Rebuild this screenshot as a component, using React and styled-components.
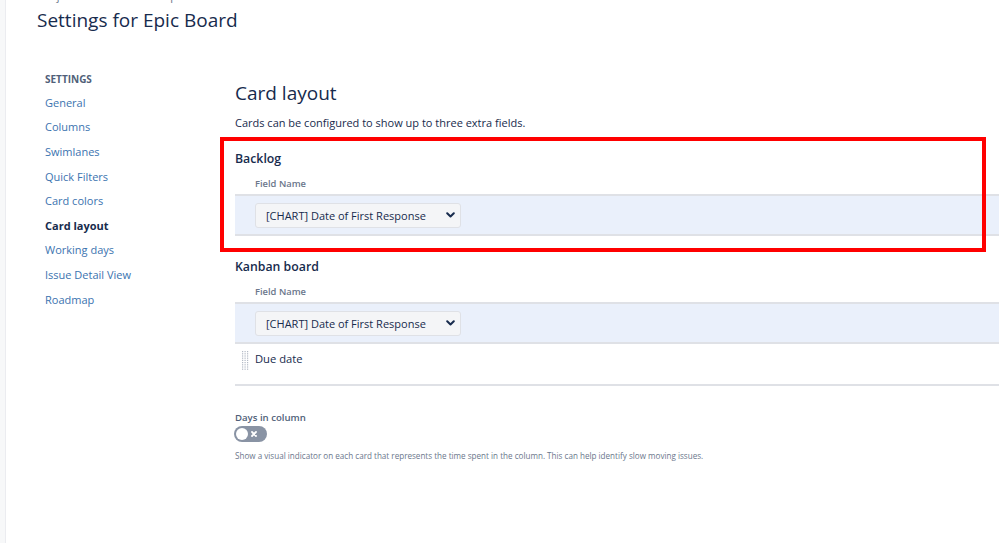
import React from "react";
import styled, { createGlobalStyle } from "styled-components";

const Global = createGlobalStyle`
  html, body { margin: 0; padding: 0; background: #fff; }
  body { font-family: "Open Sans", "Noto Sans", "Liberation Sans", sans-serif; color: #172b4d; overflow: hidden; }
  * { box-sizing: border-box; }
`;

const Page = styled.div`
  display: flex;
  width: 999px;
  height: 543px;
  position: relative;
  overflow: hidden;
`;

const LeftStrip = styled.div`
  width: 6px;
  flex: none;
  background: #f7f8f9;
  border-right: 1px solid #ebecf0;
`;

const Content = styled.div`
  flex: 1;
  padding-left: 31px;
  display: flex;
  flex-direction: column;
`;

const Breadcrumb = styled.div`
  font-size: 11px;
  color: #6b778c;
  height: 4px;
  line-height: 4px;
  overflow: hidden;
  padding-left: 2px;
  span { position: relative; top: -6px; }
`;

const Title = styled.h1`
  margin: 0;
  font-size: 19px;
  font-weight: 400;
  line-height: 30px;
  height: 30px;
  color: #172b4d;
  margin-top: 1px;
`;

const Body = styled.div`
  display: flex;
  margin-top: 36px;
`;

const Sidebar = styled.nav`
  width: 198px;
  flex: none;
  padding-left: 8px;
`;

const SideHeading = styled.div`
  font-size: 10px;
  font-weight: 700;
  color: #505f79;
  text-transform: uppercase;
  line-height: 16px;
  height: 16px;
  margin-bottom: 7.8px;
`;

const SideLink = styled.div`
  font-size: 11px;
  line-height: 16px;
  height: 24.6px;
  color: ${(p) => (p.$active ? "#172b4d" : "#3b73af")};
  font-weight: ${(p) => (p.$active ? 700 : 400)};
`;

const Main = styled.main`
  flex: 1;
  display: flex;
  flex-direction: column;
  position: relative;
  padding-top: 7px;
`;

const H2 = styled.h2`
  margin: 0;
  font-size: 19px;
  font-weight: 500;
  line-height: 26px;
  color: #172b4d;
  margin-top: 2px;
`;

const Desc = styled.p`
  margin: 0;
  margin-top: 10px;
  font-size: 11px;
  line-height: 14px;
  color: #172b4d;
`;

const Section = styled.section`
  display: flex;
  flex-direction: column;
  margin-top: ${(p) => p.$top}px;
`;

const SectionTitle = styled.h3`
  margin: 0;
  font-size: 12.3px;
  font-weight: 600;
  line-height: 16px;
  color: #172b4d;
`;

const FieldLabel = styled.div`
  font-size: 9.4px;
  font-weight: 600;
  color: #6b778c;
  line-height: 14px;
  padding-left: 20px;
  margin-top: 10px;
  margin-bottom: 3px;
`;

const Row = styled.div`
  display: flex;
  align-items: ${(p) => (p.$top ? "flex-start" : "center")};
  padding-top: ${(p) => (p.$top ? "8px" : "0")};
  height: 42px;
  margin-right: -40px;
  padding-left: 20px;
  background: ${(p) => (p.$highlight ? "#eaf0fb" : "#fff")};
  border-top: ${(p) => (p.$noTop ? "none" : "2px solid #dfe1e6")};
  border-bottom: 2px solid #dfe1e6;
  position: relative;
`;

const Select = styled.div`
  width: 206px;
  height: 25px;
  background: #f4f5f7;
  border: 1px solid #dfe1e6;
  border-radius: 3px;
  display: flex;
  align-items: center;
  justify-content: space-between;
  padding: 0 5px 0 10px;
  font-size: 11px;
  color: #172b4d;
`;

const Grip = styled.svg`
  position: absolute;
  left: 7px;
  top: 7px;
`;

const PlainText = styled.span`
  font-size: 11.2px;
  line-height: 14px;
  color: #172b4d;
`;

const Setting = styled.div`
  margin-top: 25px;
  display: flex;
  flex-direction: column;
`;

const SettingLabel = styled.div`
  font-size: 9.6px;
  font-weight: 600;
  color: #505f79;
  line-height: 14px;
`;

const Toggle = styled.div`
  width: 33px;
  height: 16px;
  border-radius: 8px;
  background: #8993a4;
  position: relative;
  margin-top: 1px;
  margin-left: -1px;
  &::before {
    content: "";
    position: absolute;
    left: 2px;
    top: 2px;
    width: 12px;
    height: 12px;
    border-radius: 50%;
    background: #fff;
  }
`;

const ToggleX = styled.svg`
  position: absolute;
  right: 10px;
  top: 5px;
`;

const Help = styled.p`
  margin: 0;
  margin-top: 7px;
  font-size: 8.1px;
  line-height: 13px;
  color: #6b778c;
`;

const Highlight = styled.div`
  position: absolute;
  left: -15px;
  top: 66px;
  width: 766px;
  height: 115px;
  border: 4px solid #ff0000;
  pointer-events: none;
`;

const Chevron = () => (
  <svg width="9" height="6" viewBox="0 0 9 6">
    <path d="M1.2 1.2 L4.5 4.5 L7.8 1.2" fill="none" stroke="#172b4d" strokeWidth="2" strokeLinecap="round" strokeLinejoin="round" />
  </svg>
);

const GripIcon = () => {
  const dots = [];
  for (let r = 0; r < 9; r++) {
    for (let c = 0; c < 3; c++) {
      dots.push(<rect key={`${r}-${c}`} x={c * 2.5} y={r * 2.2} width="1.2" height="1.2" fill="#b3bac5" />);
    }
  }
  return (
    <Grip width="7" height="19" viewBox="0 0 7 19">
      {dots}
    </Grip>
  );
};

const FieldSelect = () => (
  <Select>
    <span>[CHART] Date of First Response</span>
    <Chevron />
  </Select>
);

const links = [
  "General",
  "Columns",
  "Swimlanes",
  "Quick Filters",
  "Card colors",
  "Card layout",
  "Working days",
  "Issue Detail View",
  "Roadmap",
];

export default function App() {
  return (
    <>
      <Global />
      <Page>
        <LeftStrip />
        <Content>
          <Breadcrumb>
            <span>Projects / Service Desk / Epic Board</span>
          </Breadcrumb>
          <Title>Settings for Epic Board</Title>
          <Body>
            <Sidebar>
              <SideHeading>Settings</SideHeading>
              {links.map((l) => (
                <SideLink key={l} $active={l === "Card layout"}>
                  {l}
                </SideLink>
              ))}
            </Sidebar>
            <Main>
              <H2>Card layout</H2>
              <Desc>Cards can be configured to show up to three extra fields.</Desc>
              <Section $top={21}>
                <SectionTitle>Backlog</SectionTitle>
                <FieldLabel>Field Name</FieldLabel>
                <Row $highlight>
                  <FieldSelect />
                </Row>
              </Section>
              <Section $top={23}>
                <SectionTitle>Kanban board</SectionTitle>
                <FieldLabel>Field Name</FieldLabel>
                <Row $highlight>
                  <FieldSelect />
                </Row>
                <Row $noTop $top>
                  <GripIcon />
                  <PlainText>Due date</PlainText>
                </Row>
              </Section>
              <Setting>
                <SettingLabel>Days in column</SettingLabel>
                <Toggle>
                  <ToggleX width="6" height="6" viewBox="0 0 6 6">
                    <path d="M1 1 L5 5 M5 1 L1 5" stroke="#fff" strokeWidth="1.8" strokeLinecap="round" />
                  </ToggleX>
                </Toggle>
                <Help>
                  Show a visual indicator on each card that represents the time spent in the column. This can help identify slow moving issues.
                </Help>
              </Setting>
              <Highlight />
            </Main>
          </Body>
        </Content>
      </Page>
    </>
  );
}
